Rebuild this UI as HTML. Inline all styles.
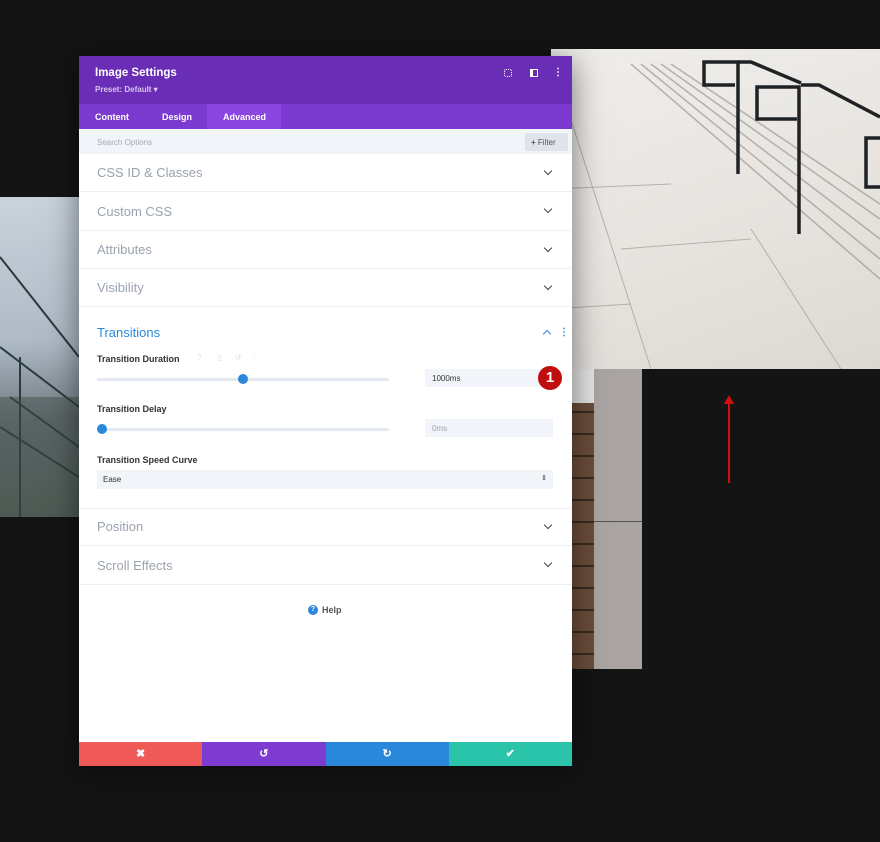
<!DOCTYPE html>
<html><head><meta charset="utf-8"><style>
*{box-sizing:border-box;margin:0;padding:0}
body{width:880px;height:842px;background:#141414;position:relative;overflow:hidden;font-family:"Liberation Sans",sans-serif}
.abs{position:absolute}
.panel{left:79px;top:56px;width:493px;height:710px;background:#fff;box-shadow:0 5px 30px rgba(0,0,0,.5)}
.row{position:absolute;left:0;width:493px;border-bottom:1px solid #eef0f3;color:#9aa3af;font-size:13px;padding-left:18px}
.chev{position:absolute;right:21px;width:6px;height:6px;border-right:1.6px solid #444;border-bottom:1.6px solid #444;transform:rotate(45deg)}
.lbl{position:absolute;left:18px;font-size:9px;color:#333;font-weight:bold}
.track{position:absolute;left:18px;width:292px;height:3px;background:#e4e8ef;border-radius:2px}
.knob{position:absolute;width:10px;height:10px;border-radius:50%;background:#2b87da}
.inp{position:absolute;left:346px;width:128px;height:18px;background:#f1f4f8;font-size:8px;color:#333;padding:5px 7px}
.btn{position:absolute;top:686px;height:24px;width:123.25px;color:#fff;font-size:11px;text-align:center;line-height:24px;font-weight:bold}
</style></head><body>
<div class="abs" style="left:551px;top:49px;width:329px;height:320px;background:linear-gradient(160deg,#efedea 0%,#e8e5e1 50%,#dcd8d3 100%)">
<svg width="329" height="320" style="position:absolute;left:0;top:0">
<g stroke="#a8a39d" stroke-width="1" opacity=".8"><line x1="10" y1="40" x2="100" y2="320"/><line x1="200" y1="180" x2="290" y2="320"/><line x1="0" y1="140" x2="120" y2="135"/><line x1="0" y1="260" x2="80" y2="255"/><line x1="70" y1="200" x2="200" y2="190"/></g>
<g stroke="#8e8984" stroke-width="1.5" opacity=".6"><line x1="80" y1="15" x2="329" y2="230"/><line x1="90" y1="15" x2="329" y2="210"/><line x1="100" y1="15" x2="329" y2="190"/><line x1="110" y1="15" x2="329" y2="170"/><line x1="120" y1="15" x2="329" y2="155"/></g>
<g stroke="#1e2224" stroke-width="3.5" fill="none"><path d="M187 125 V13 H153 V36 H184"/><path d="M187 13 H200 L250 34"/><path d="M248 185 V38 H206 V70 H246"/><path d="M250 36 H268 L329 68"/><path d="M329 89 H315 V138 H329"/></g>
</svg></div>
<div class="abs" style="left:0;top:197px;width:79px;height:320px;background:linear-gradient(180deg,#c9d3dc 0%,#aebac6 45%,#6f7a80 70%,#5a6a60 100%)">
<svg width="79" height="320" style="position:absolute;left:0;top:0"><g stroke="#2b3a3c" stroke-width="2" fill="none"><line x1="0" y1="60" x2="79" y2="160"/><line x1="0" y1="150" x2="79" y2="210"/><path d="M10 200 L79 250 M0 230 L79 280 M20 160 V320"/></g><rect x="0" y="200" width="79" height="120" fill="#3f4a44" opacity=".45"/></svg></div>
<div class="abs" style="left:572px;top:369px;width:70px;height:300px;background:#c9c5c3">
<div class="abs" style="left:0;top:0;width:22px;height:300px;background:repeating-linear-gradient(180deg,#6b4d3b 0 20px,#3a2a20 20px 22px)"></div>
<div class="abs" style="left:0;top:0;width:22px;height:34px;background:#e4e4e4"></div>
<div class="abs" style="left:22px;top:0;width:48px;height:300px;background:#aaa4a2"></div>
<div class="abs" style="left:22px;top:152px;width:48px;height:1px;background:#555"></div></div>
<div class="abs" style="left:728px;top:402px;width:2px;height:81px;background:#d01010"></div>
<div class="abs" style="left:724px;top:395px;width:0;height:0;border-left:5px solid transparent;border-right:5px solid transparent;border-bottom:9px solid #d01010"></div>

<div class="abs panel">
<div class="abs" style="left:0;top:0;width:493px;height:48px;background:#6a2db6">
<div class="abs" style="left:16px;top:11px;color:#fff;font-size:11.5px;font-weight:bold">Image Settings</div>
<div class="abs" style="left:16px;top:29px;color:#d9c8f2;font-size:8px;font-weight:bold">Preset: Default ▾</div>
<div class="abs" style="left:425px;top:13px;width:8px;height:8px;border:1.5px dotted #fff;border-radius:2px"></div>
<div class="abs" style="left:451px;top:13px;width:8px;height:8px;border:1.5px solid #fff;border-left-width:3px"></div>
<div class="abs" style="left:474px;top:11px;color:#fff;font-size:10px;font-weight:bold">⋮</div>
</div>
<div class="abs" style="left:0;top:48px;width:493px;height:25px;background:#7b3ad0;font-size:9px;color:#fff;font-weight:bold">
<div class="abs" style="left:16px;top:8px">Content</div>
<div class="abs" style="left:83px;top:8px">Design</div>
<div class="abs" style="left:128px;top:0;width:74px;height:25px;background:#8b45e0"></div>
<div class="abs" style="left:144px;top:8px">Advanced</div>
</div>
<div class="abs" style="left:0;top:73px;width:493px;height:25px;background:#f1f4f8">
<div class="abs" style="left:18px;top:9px;font-size:8px;color:#a3abb6">Search Options</div>
<div class="abs" style="left:446px;top:4px;width:43px;height:18px;background:#e0e4ea;border-radius:2px;font-size:8px;color:#555;padding:5px 0 0 6px"><b>+</b> Filter</div>
</div>
<div class="row" style="top:98px;height:38px;line-height:38px">CSS ID &amp; Classes<span class="chev" style="top:14px"></span></div>
<div class="row" style="top:136px;height:39px;line-height:39px">Custom CSS<span class="chev" style="top:14px"></span></div>
<div class="row" style="top:175px;height:38px;line-height:38px">Attributes<span class="chev" style="top:14px"></span></div>
<div class="row" style="top:213px;height:38px;line-height:38px">Visibility<span class="chev" style="top:14px"></span></div>
<div class="abs" style="left:18px;top:269px;font-size:13px;color:#2b87da">Transitions</div>
<div class="abs" style="left:465px;top:275px;width:6px;height:6px;border-left:1.6px solid #2b87da;border-top:1.6px solid #2b87da;transform:rotate(45deg)"></div>
<div class="abs" style="left:480px;top:271px;color:#2b87da;font-size:10px;font-weight:bold">⋮</div>
<div class="lbl" style="top:298px">Transition Duration</div>
<div class="abs" style="left:118px;top:297px;font-size:8px;color:#ddd">?&nbsp;&nbsp;&nbsp;&nbsp;&nbsp;&nbsp;&nbsp;▯&nbsp;&nbsp;&nbsp;&nbsp;&nbsp;&nbsp;↺&nbsp;&nbsp;&nbsp;&nbsp;⋮</div>
<div class="track" style="top:322px"></div><div class="knob" style="left:159px;top:318px"></div>
<div class="inp" style="top:313px">1000ms</div>
<div class="abs" style="left:459px;top:310px;width:24px;height:24px;border-radius:50%;background:#c00d0d;color:#fff;font-size:15px;font-weight:bold;text-align:center;line-height:24px">1</div>
<div class="lbl" style="top:348px">Transition Delay</div>
<div class="track" style="top:372px"></div><div class="knob" style="left:18px;top:368px"></div>
<div class="inp" style="top:363px;color:#9aa3af">0ms</div>
<div class="lbl" style="top:399px">Transition Speed Curve</div>
<div class="abs" style="left:18px;top:414px;width:456px;height:19px;background:#f1f4f8;font-size:8px;color:#333;padding:5px 6px">Ease<span style="position:absolute;right:6px;top:4px;font-size:7px">⇕</span></div>
<div class="row" style="top:452px;height:0;border-bottom:1px solid #eef0f3;padding:0"></div>
<div class="row" style="top:452px;height:38px;line-height:38px">Position<span class="chev" style="top:14px"></span></div>
<div class="row" style="top:490px;height:39px;line-height:39px">Scroll Effects<span class="chev" style="top:14px"></span></div>
<div class="abs" style="left:229px;top:549px;width:10px;height:10px;border-radius:50%;background:#2b87da;color:#fff;font-size:7px;font-weight:bold;text-align:center;line-height:10px">?</div>
<div class="abs" style="left:243px;top:549px;font-size:9px;color:#555;font-weight:bold">Help</div>
<div class="btn" style="left:0;background:#ef5a58">✖</div>
<div class="btn" style="left:123.25px;background:#7e3bd0">↺</div>
<div class="btn" style="left:246.5px;background:#2b87da">↻</div>
<div class="btn" style="left:369.75px;background:#29c4a9">✔</div>
</div>
</body></html>
